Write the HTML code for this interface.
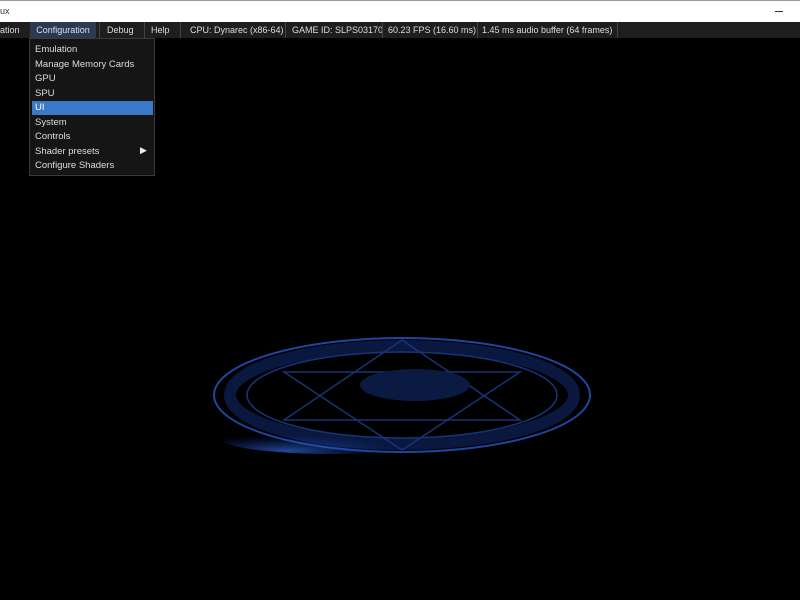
<!DOCTYPE html>
<html><head><style>
body{margin:0;width:800px;height:600px;background:#000;overflow:hidden;font-family:"Liberation Sans","DejaVu Sans",sans-serif;position:relative}
#title{position:absolute;left:0;top:0;width:800px;height:22px;background:#fff;border-top:1px solid #999;box-sizing:border-box}
#title span{position:absolute;left:0;top:5px;font-size:9px;color:#333}
#title .min{position:absolute;left:775px;top:10px;width:8px;height:1px;background:#333}
#menu{position:absolute;left:0;top:22px;width:800px;height:16px;background:#1e1e1e;font-size:9px;color:#ddd}
#menu div{position:absolute;top:0;height:16px;line-height:17px;white-space:nowrap}
.sep{width:1px;background:#444}
#dd{position:absolute;left:29px;top:38px;width:126px;height:138px;background:#151515;border:1px solid #3a3a3a;box-sizing:border-box;font-size:9.5px;color:#ddd}
#dd div{position:absolute;left:5px;white-space:nowrap}
#hl{position:absolute;left:2px!important;top:62px;width:121px;height:14px;background:#3a78c8}
</style></head><body>
<div id="title"><span>ux</span><div class="min"></div></div>
<div id="menu">
<div style="left:0">ation</div>
<div style="left:30px;width:66px;background:#2b3a4e;color:#cfe0f5;text-align:center">Configuration</div>
<div class="sep" style="left:99px"></div>
<div style="left:107px">Debug</div>
<div class="sep" style="left:144px"></div>
<div style="left:151px">Help</div>
<div class="sep" style="left:180px"></div>
<div style="left:190px">CPU: Dynarec (x86-64)</div>
<div class="sep" style="left:285px"></div>
<div style="left:292px">GAME ID: SLPS03170</div>
<div class="sep" style="left:382px"></div>
<div style="left:388px">60.23 FPS (16.60 ms)</div>
<div class="sep" style="left:477px"></div>
<div style="left:482px">1.45 ms audio buffer (64 frames)</div>
<div class="sep" style="left:617px"></div>
</div>
<div id="dd">
<div id="hl"></div>
<div style="top:5px">Emulation</div>
<div style="top:20px">Manage Memory Cards</div>
<div style="top:34px">GPU</div>
<div style="top:49px">SPU</div>
<div style="top:63px;color:#fff">UI</div>
<div style="top:78px">System</div>
<div style="top:92px">Controls</div>
<div style="top:107px">Shader presets</div>
<div style="top:106px;left:110px;color:#eee;font-size:9px">&#9654;</div>
<div style="top:121px">Configure Shaders</div>
</div>
<svg style="position:absolute;left:0;top:0" width="800" height="600">
<defs><radialGradient id="g" cx="0.3" cy="0.9" r="0.5"><stop offset="0" stop-color="#3a7aff" stop-opacity="0.6"/><stop offset="1" stop-color="#1030a0" stop-opacity="0"/></radialGradient></defs>
<g fill="none" stroke="#173478">
<ellipse cx="402" cy="395" rx="188" ry="57" stroke-width="2" stroke="#1e45a0"/>
<ellipse cx="402" cy="395" rx="172" ry="49" stroke-width="12" stroke="#0a1840"/>
<ellipse cx="402" cy="395" rx="155" ry="43" stroke-width="1.5"/>
<polygon points="402,340 520,420 284,420" stroke-width="1.5"/>
<polygon points="402,450 284,372 520,372" stroke-width="1.5"/>
<ellipse cx="415" cy="385" rx="55" ry="16" fill="#0a1a40" stroke="none"/>
</g>
<ellipse cx="330" cy="438" rx="110" ry="16" fill="url(#g)"/>
</svg>
</body></html>
